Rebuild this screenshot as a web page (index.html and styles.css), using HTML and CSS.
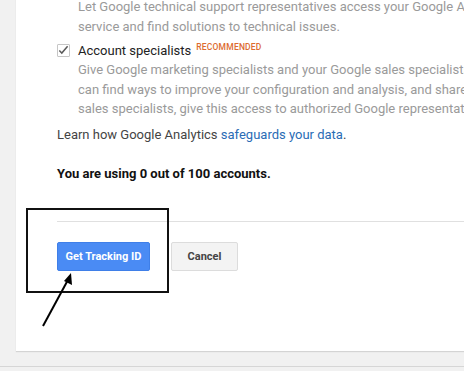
FILE: index.html
```html
<!DOCTYPE html>
<html>
<head>
  <title>Tracking ID</title>
  <meta charset="utf-8">
  <link rel="stylesheet" href="styles.css">
</head>
<body>
  <div class="page">
    <div class="card">
      <div class="option">
        <p class="desc">Let Google technical support representatives access your Google Analytics data and account when necessary to provide<br>service and find solutions to technical issues.</p>
      </div>
      <div class="option">
        <label class="check-row">
          <span class="checkbox">
            <svg width="13" height="13" viewBox="0 0 13 13"><path d="M2.5 6.5 L5.2 9.3 L11.5 1.8" fill="none" stroke="#5a5a5a" stroke-width="1.6"/></svg>
          </span>
          <span class="title">Account specialists</span>
          <span class="badge">RECOMMENDED</span>
        </label>
        <p class="desc">Give Google marketing specialists and your Google sales specialists access to your Google Analytics data and account, so they<br>can find ways to improve your configuration and analysis, and share optimization tips with you. If you don't have dedicated<br>sales specialists, give this access to authorized Google representatives.</p>
      </div>
      <p class="learn">Learn how Google Analytics <a href="#">safeguards your data</a>.</p>
      <p class="usage">You are using 0 out of 100 accounts.</p>
      <div class="divider"></div>
      <div class="actions">
        <a href="#" class="btn btn-primary">Get Tracking ID</a>
        <a href="#" class="btn btn-cancel">Cancel</a>
      </div>
    </div>
    <div class="footer"></div>

    <div class="mark-box"></div>
    <svg class="mark-arrow" width="464" height="371" viewBox="0 0 464 371">
      <line x1="43" y1="329" x2="69" y2="281" stroke="#000" stroke-width="2"/>
      <polygon points="71,276 72,288 64,284" fill="#000"/>
    </svg>
  </div>
</body>
</html>
```
FILE: styles.css
```css
*{
  padding:0;
  margin:0;
  box-sizing:border-box;
}
a{
  text-decoration: none;
}
html,body{
  height:100%;
  overflow:hidden;
}
body{
  background:#f1f1f1;
  font-family: Roboto, "Liberation Sans", Arial, sans-serif;
  font-size:13px;
  color:#444;
}
.page{
  position:relative;
  height:371px;
}
.card{
  margin-left:16px;
  margin-top:-3px;
  background:#fff;
  box-shadow:0 1px 1px #d4d4d4;
  padding:0 0 0 41px;
  height:354px;
  white-space:nowrap;
  overflow:hidden;
}
.desc{
  color:#9a9a9a;
  line-height:19.5px;
  padding-left:21px;
}
.option + .option{
  margin-top:4px;
}
.check-row{
  display:flex;
  align-items:center;
  height:20px;
}
.checkbox{
  width:13px;
  height:13px;
  border:1px solid #c6c6c6;
  border-radius:1px;
  margin-right:8px;
  display:flex;
}
.checkbox svg{
  margin:-1px 0 0 -1px;
}
.title{
  font-size:13px;
  color:#222;
}
.badge{
  font-size:8.5px;
  font-weight:500;
  color:#dd6b30;
  margin-left:5px;
  align-self:flex-start;
  margin-top:2px;
  letter-spacing:0.2px;
}
.learn{
  margin-top:6px;
  line-height:19.5px;
  color:#444;
}
.learn a{
  color:#2a6cb5;
}
.usage{
  margin-top:20px;
  line-height:19.5px;
  font-weight:bold;
  color:#111;
}
.divider{
  margin-top:37px;
  border-top:1px solid #e0e0e0;
}
.actions{
  display:flex;
  gap:21px;
  margin-top:20px;
}
.btn{
  display:block;
  height:29px;
  line-height:27px;
  font-size:11px;
  font-weight:bold;
  border-radius:2px;
  text-align:center;
}
.btn-primary{
  width:93px;
  background:#4a8bf4;
  border:1px solid #3f7fe8;
  color:#fff;
}
.btn-cancel{
  width:67px;
  background:#f3f3f3;
  border:1px solid #dcdcdc;
  color:#444;
}
.footer{
  margin-top:15px;
  border-top:1px solid #d6d6d6;
  height:10px;
}
.mark-box{
  position:absolute;
  left:26px;
  top:211px;
  width:143px;
  height:85px;
  border:2px solid #111;
}
.mark-arrow{
  position:absolute;
  left:0;
  top:0;
}
```
